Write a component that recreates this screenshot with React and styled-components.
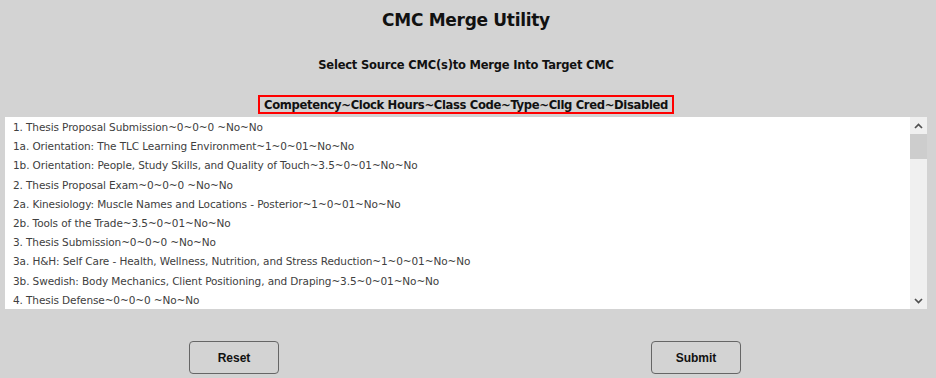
import React from "react";
import styled, { createGlobalStyle } from "styled-components";

const Global = createGlobalStyle`
  html, body { margin: 0; padding: 0; background: #d3d3d3; }
  body { font-family: "DejaVu Sans", "Liberation Sans", sans-serif; }
`;

const Page = styled.div`
  width: 936px;
  height: 378px;
  display: flex;
  flex-direction: column;
  align-items: center;
  box-sizing: border-box;
  padding: 9px 9px 0 5px;
`;

const Title = styled.h1`
  margin: 0;
  font-family: "DejaVu Sans", sans-serif;
  font-size: 17px;
  font-weight: bold;
  line-height: 22px;
  color: #111;
  letter-spacing: -0.3px;
`;

const Subtitle = styled.h2`
  margin: 26px 0 0;
  font-family: "DejaVu Sans", sans-serif;
  font-size: 11.5px;
  font-weight: bold;
  line-height: 16px;
  color: #111;
  letter-spacing: -0.2px;
`;

const Header = styled.div`
  margin-top: 22px;
  border: 2px solid #f00;
  padding: 0 4px;
  height: 15px;
  display: flex;
  align-items: center;
  font-family: "DejaVu Sans", sans-serif;
  font-size: 11.6px;
  font-weight: bold;
  color: #111;
  letter-spacing: -0.35px;
`;

const ListBox = styled.div`
  margin-top: 3px;
  align-self: stretch;
  height: 192px;
  background: #fff;
  display: flex;
  overflow: hidden;
`;

const Viewport = styled.div`
  flex: 1;
  overflow: hidden;
  padding-top: 1px;
`;

const Item = styled.div`
  height: 19.2px;
  line-height: 19px;
  padding-left: 8px;
  font-family: "DejaVu Sans", sans-serif;
  font-size: 10.5px;
  color: #404040;
  white-space: nowrap;
  letter-spacing: -0.1px;
`;

const ScrollBar = styled.div`
  width: 17px;
  flex: none;
  background: #f0f0f0;
  display: flex;
  flex-direction: column;
`;

const ArrowButton = styled.div`
  height: 17px;
  flex: none;
  display: flex;
  align-items: center;
  justify-content: center;
`;

const Track = styled.div`
  flex: 1;
  display: flex;
  flex-direction: column;
`;

const Thumb = styled.div`
  height: 25px;
  background: #cdcdcd;
`;

const ButtonRow = styled.div`
  align-self: stretch;
  margin-top: 32px;
  display: flex;
  padding-left: 184px;
  gap: 372px;
`;

const Button = styled.button`
  width: 90px;
  height: 33px;
  border: 1px solid #666;
  border-radius: 4px;
  background: #d3d3d3;
  font-family: "Liberation Sans", Arial, sans-serif;
  font-size: 12px;
  font-weight: bold;
  color: #111;
  padding: 0;
`;

const Chevron = ({ up }) => (
  <svg width="9" height="6" viewBox="0 0 9 6">
    <path
      d={up ? "M1 5 L4.5 1.5 L8 5" : "M1 1 L4.5 4.5 L8 1"}
      fill="none"
      stroke="#505050"
      strokeWidth="1.7"
    />
  </svg>
);

const items = [
  "1. Thesis Proposal Submission~0~0~0 ~No~No",
  "1a. Orientation: The TLC Learning Environment~1~0~01~No~No",
  "1b. Orientation: People, Study Skills, and Quality of Touch~3.5~0~01~No~No",
  "2. Thesis Proposal Exam~0~0~0 ~No~No",
  "2a. Kinesiology: Muscle Names and Locations - Posterior~1~0~01~No~No",
  "2b. Tools of the Trade~3.5~0~01~No~No",
  "3. Thesis Submission~0~0~0 ~No~No",
  "3a. H&H: Self Care - Health, Wellness, Nutrition, and Stress Reduction~1~0~01~No~No",
  "3b. Swedish: Body Mechanics, Client Positioning, and Draping~3.5~0~01~No~No",
  "4. Thesis Defense~0~0~0 ~No~No",
];

export default function App() {
  return (
    <>
      <Global />
      <Page>
        <Title>CMC Merge Utility</Title>
        <Subtitle>Select Source CMC(s)to Merge Into Target CMC</Subtitle>
        <Header>Competency~Clock Hours~Class Code~Type~Cllg Cred~Disabled</Header>
        <ListBox>
          <Viewport>
            {items.map((t, i) => (
              <Item key={i}>{t}</Item>
            ))}
          </Viewport>
          <ScrollBar>
            <ArrowButton>
              <Chevron up />
            </ArrowButton>
            <Track>
              <Thumb />
            </Track>
            <ArrowButton>
              <Chevron />
            </ArrowButton>
          </ScrollBar>
        </ListBox>
        <ButtonRow>
          <Button>Reset</Button>
          <Button>Submit</Button>
        </ButtonRow>
      </Page>
    </>
  );
}
